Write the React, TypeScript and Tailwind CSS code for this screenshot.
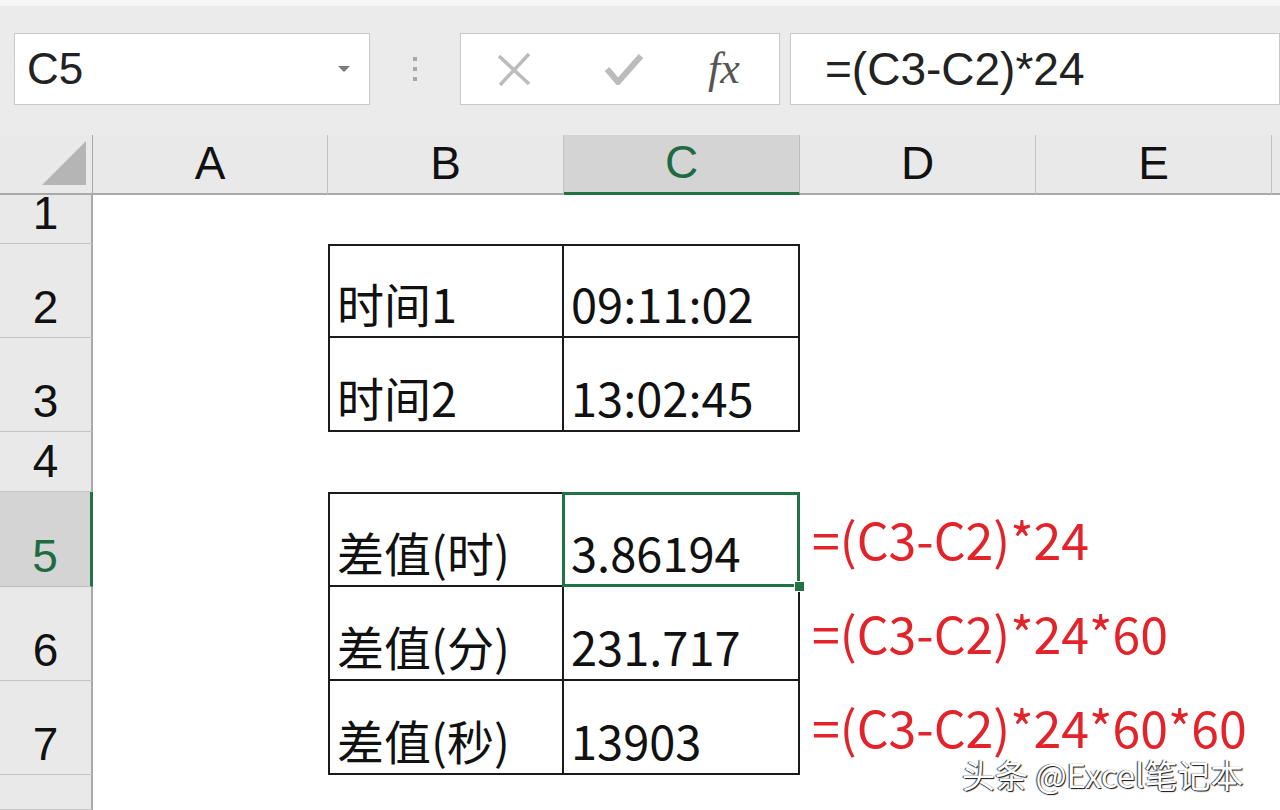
import React from "react";

// Zoomed-in Excel sheet: name box, formula bar, and a small time-diff table.

const COLS = ["A", "B", "C", "D", "E"];
const ROW_H = [49, 94, 94, 60, 95, 94, 94];

const cjk = "font-['Microsoft_YaHei','Noto_Sans_CJK_SC','Noto_Sans',sans-serif]";
const arial = "font-['Liberation_Sans',Arial,sans-serif]";

type CellData = { text?: string; boxed?: boolean; top?: boolean; left?: boolean; red?: string };

const cells: Record<string, CellData> = {
  B2: { text: "时间1", boxed: true, top: true, left: true },
  C2: { text: "09:11:02", boxed: true, top: true },
  B3: { text: "时间2", boxed: true, left: true },
  C3: { text: "13:02:45", boxed: true },
  B5: { text: "差值(时)", boxed: true, top: true, left: true },
  C5: { text: "3.86194", boxed: true, top: true },
  D5: { red: "=(C3-C2)*24" },
  B6: { text: "差值(分)", boxed: true, left: true },
  C6: { text: "231.717", boxed: true },
  D6: { red: "=(C3-C2)*24*60" },
  B7: { text: "差值(秒)", boxed: true, left: true },
  C7: { text: "13903", boxed: true },
  D7: { red: "=(C3-C2)*24*60*60" },
};

function Cell({ id }: { id: string }) {
  const c = cells[id];
  if (!c) return <div className="bg-white" />;
  const border = c.boxed
    ? `border-[#1b1b1b] border-r-2 border-b-2 ${c.top ? "border-t-2" : ""} ${c.left ? "border-l-2" : ""}`
    : "";
  return (
    <div className={`relative flex items-end bg-white ${border}`}>
      {c.text && (
        <span className={`${cjk} whitespace-nowrap pb-[3px] pl-[7px] text-[47px] leading-[1.25] text-[#111]`}>
          {c.text}
        </span>
      )}
      {c.red && (
        <span className={`${cjk} absolute bottom-[24px] left-[12px] whitespace-nowrap text-[50px] leading-none text-[#e3232a]`}>
          {c.red}
        </span>
      )}
      {id === "C5" && (
        <>
          <div className="pointer-events-none absolute -bottom-[2px] -left-[2px] -right-[2px] -top-[2px] z-10 border-[3px] border-[#217346]" />
          <div className="absolute -bottom-[7px] -right-[7px] z-20 h-[11px] w-[11px] border border-white bg-[#217346]" />
        </>
      )}
    </div>
  );
}

export default function App() {
  return (
    <div className="relative flex h-[810px] w-[1280px] flex-col overflow-hidden bg-white">
      {/* formula bar */}
      <div className="flex h-[135px] shrink-0 flex-col bg-[#ebebeb]">
        <div className="h-[6px] bg-[#f6f6f6]" />
        <div className="mt-[27px] flex h-[72px] items-stretch">
          <div className="ml-[14px] flex w-[356px] items-center justify-between border border-[#c9c9c9] bg-white pl-[12px] pr-[18px]">
            <span className={`${arial} text-[44px] text-[#222]`}>C5</span>
            <svg width="14" height="8" viewBox="0 0 14 8">
              <path d="M1 1h12L7 7z" fill="#7a7a7a" />
            </svg>
          </div>
          <div className="flex w-[90px] flex-col items-center justify-center gap-[6px]">
            <span className="h-[4px] w-[4px] bg-[#a8a8a8]" />
            <span className="h-[4px] w-[4px] bg-[#a8a8a8]" />
            <span className="h-[4px] w-[4px] bg-[#a8a8a8]" />
          </div>
          <div className="flex w-[320px] items-center border border-[#c9c9c9] bg-white">
            <svg className="ml-[35px]" width="36" height="36" viewBox="0 0 36 36">
              <path d="M3 5L33 33M33 3L4 34" stroke="#bcbcbc" strokeWidth="3.5" />
            </svg>
            <svg className="ml-[72px]" width="40" height="32" viewBox="0 0 40 32">
              <path d="M3 16L14 29L37 3" stroke="#bcbcbc" strokeWidth="6" fill="none" />
            </svg>
            <span className="ml-[64px] font-['Liberation_Serif',serif] text-[44px] italic leading-none text-[#555]">
              fx
            </span>
          </div>
          <div className="ml-[10px] flex flex-1 items-center border border-[#c9c9c9] bg-white pl-[34px]">
            <span className={`${arial} text-[46px] text-[#222]`}>=(C3-C2)*24</span>
          </div>
        </div>
      </div>

      {/* sheet grid */}
      <div className="grid flex-1 grid-cols-[93px_235px_236px_236px_236px_236px_1fr] grid-rows-[60px_49px_94px_94px_60px_95px_94px_94px_1fr]">
        <div className="relative border-b-2 border-r border-[#a9a9a9] bg-[#e9e9e9]">
          <svg className="absolute bottom-[8px] right-[6px]" width="44" height="44" viewBox="0 0 44 44">
            <path d="M44 0V44H0z" fill="#b5b5b5" />
          </svg>
        </div>
        {COLS.map((c) => (
          <div
            key={c}
            className={`flex items-end justify-center border-r ${
              c === "C"
                ? "border-b-[3px] border-r-[#bdbdbd] border-b-[#217346] bg-[#d4d4d4] text-[#1e6b41]"
                : "border-b-2 border-[#a9a9a9] border-r-[#c3c3c3] bg-[#e9e9e9] text-[#111]"
            }`}
          >
            <span className={`${arial} pb-[2px] text-[46px] leading-[1.2]`}>{c}</span>
          </div>
        ))}
        <div className="border-b-2 border-[#a9a9a9] bg-[#e9e9e9]" />

        {[...ROW_H, 0].map((_, i) => {
          const r = i + 1;
          const sel = r === 5;
          return (
            <React.Fragment key={r}>
              <div
                className={`flex items-end justify-center border-b ${
                  sel
                    ? "border-r-[3px] border-b-[#bdbdbd] border-r-[#217346] bg-[#d4d4d4] text-[#1e6b41]"
                    : "border-r-2 border-b-[#c3c3c3] border-r-[#a9a9a9] bg-[#e9e9e9] text-[#111]"
                }`}
              >
                {r <= 7 && <span className={`${arial} pb-[2px] text-[46px] leading-[1.2]`}>{r}</span>}
              </div>
              {[...COLS, "F"].map((c) => (
                <Cell key={c + r} id={`${c}${r}`} />
              ))}
            </React.Fragment>
          );
        })}
      </div>

      {/* watermark */}
      <div
        className={`${cjk} absolute left-[962px] top-[758px] z-30 whitespace-nowrap text-[33px] leading-none text-white`}
        style={{ textShadow: "1px 1px 1px #111, -1px 0 1px #333" }}
      >
        头条 @Excel笔记本
      </div>
    </div>
  );
}
